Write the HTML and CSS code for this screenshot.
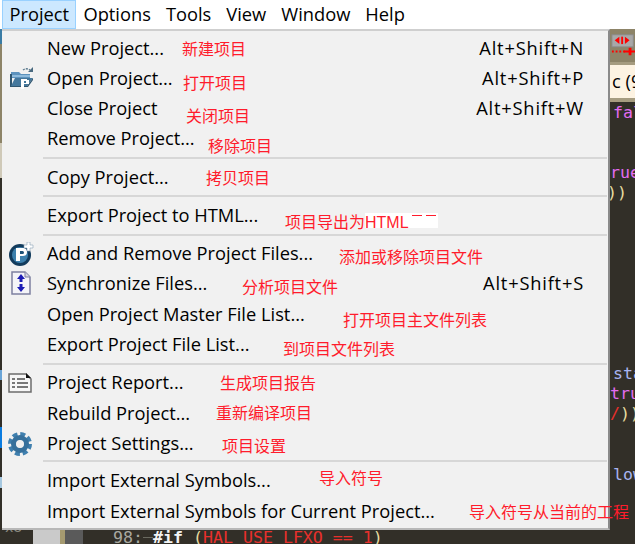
FILE: index.html
```html
<!DOCTYPE html>
<html lang="en">
<head>
    <meta charset="UTF-8">
    <meta name="viewport" content="width=device-width, initial-scale=1.0">
    <title>Project menu</title>
    <link rel="stylesheet" href="styles.css">
</head>
<body>
    <div class="menubar">
        <span class="menubar-item active">Project</span>
        <span class="menubar-item">Options</span>
        <span class="menubar-item">Tools</span>
        <span class="menubar-item">View</span>
        <span class="menubar-item">Window</span>
        <span class="menubar-item">Help</span>
    </div>

    <div class="workspace">
        <div class="left-strip">
            <i class="s1"></i><i class="s2"></i><i class="s3"></i><i class="s4"></i><i class="s5"></i><i class="s6"></i><i class="s7"></i><i class="s8"></i><i class="s9"></i><i class="s10"></i>
        </div>

        <div class="menu">
            <div class="rows rows-first">
                <div class="row"><span class="label">New Project...</span><span class="keys">Alt+Shift+N</span></div>
                <div class="row">
                    <svg class="icon icon-folder" viewBox="0 0 24 24">
                        <path d="M13 5a6 6 0 0 1 7 0" fill="none" stroke="#5f7d90" stroke-width="1.500" stroke-dasharray="2 1"/>
                        <path d="M23 2v5h-5z" fill="#4a6a80"/>
                        <path d="M1 7h8l2 2h9v4H1z" fill="#5d92bd"/>
                        <path d="M1 10h19v2H1z" fill="#8fbbdc"/>
                        <path d="M0 9h2v11h9v2H0z" fill="#2f556f"/>
                        <path d="M5 13h18l-6 8H1z" fill="#44779c"/>
                        <path d="M1 21h16l6-8v2l-5 7H1z" fill="#2f556f"/>
                        <path d="M11 14h6v1h2v4h-5v5h-3z" fill="#fff"/>
                        <path d="M14 16h2v2h-2z" fill="#44779c"/>
                    </svg>
                    <span class="label">Open Project...</span><span class="keys">Alt+Shift+P</span>
                </div>
                <div class="row"><span class="label">Close Project</span><span class="keys">Alt+Shift+W</span></div>
                <div class="row"><span class="label">Remove Project...</span></div>
            </div>
            <hr class="sep">
            <div class="rows">
                <div class="row"><span class="label">Copy Project...</span></div>
            </div>
            <hr class="sep">
            <div class="rows">
                <div class="row"><span class="label">Export Project to HTML...</span></div>
            </div>
            <hr class="sep">
            <div class="rows">
                <div class="row">
                    <svg class="icon icon-add" viewBox="0 0 26 24">
                        <circle cx="12" cy="13" r="11" fill="#123b5c"/>
                        <circle cx="12" cy="13" r="8" fill="#3d80ad"/>
                        <path d="M8 6h7q4 0 4 4t-4 4h-3v5H8z" fill="#fff"/>
                        <path d="M12 9h2.500q1.500 0 1.500 1.500T14.500 12H12z" fill="#1d5177"/>
                        <path d="M19 0h3v3h3v3h-3v3h-3V6h-3V3h3z" fill="#fff" stroke="#8aa3b5" stroke-width=".6"/>
                    </svg>
                    <span class="label">Add and Remove Project Files...</span>
                </div>
                <div class="row">
                    <svg class="icon icon-sync" viewBox="0 0 20 24">
                        <path d="M1 1h13l5 5v17H1z" fill="#f4f4f8" stroke="#7d80a0" stroke-width="1.500"/>
                        <path d="M14 1v5h5" fill="#d6d6e0" stroke="#7d80a0"/>
                        <path d="M10 3l4 5h-2.500v3h-3V8H6z" fill="#1c1cb4"/>
                        <path d="M10 21l4-5h-2.500v-3h-3v3H6z" fill="#1c1cb4"/>
                    </svg>
                    <span class="label">Synchronize Files...</span><span class="keys">Alt+Shift+S</span>
                </div>
                <div class="row"><span class="label">Open Project Master File List...</span></div>
                <div class="row"><span class="label">Export Project File List...</span></div>
            </div>
            <hr class="sep">
            <div class="rows rows-tight">
                <div class="row">
                    <svg class="icon icon-report" viewBox="0 0 24 20">
                        <path d="M1 1h17l5 5v13H1z" fill="#f6f6f6" stroke="#6c6c6c" stroke-width="1.500"/>
                        <path d="M18 0l5 5h-5z" fill="#111"/>
                        <path d="M4 5h3v2H4zM9 5h8v2H9zM4 9h3v2H4zM9 9h11v2H9zM4 13h3v2H4zM9 13h11v2H9z" fill="#777"/>
                    </svg>
                    <span class="label">Project Report...</span>
                </div>
                <div class="row"><span class="label">Rebuild Project...</span></div>
                <div class="row">
                    <svg class="icon icon-gear" viewBox="0 0 24 24">
                        <circle cx="12" cy="12" r="10" fill="none" stroke="#3f7fae" stroke-width="4" stroke-dasharray="5 2.850"/>
                        <circle cx="12" cy="12" r="6.500" fill="none" stroke="#36709c" stroke-width="5"/>
                        <circle cx="12" cy="12" r="3.500" fill="#f0f0f0"/>
                    </svg>
                    <span class="label">Project Settings...</span>
                </div>
            </div>
            <hr class="sep">
            <div class="rows rows-last">
                <div class="row"><span class="label">Import External Symbols...</span></div>
                <div class="row"><span class="label">Import External Symbols for Current Project...</span></div>
            </div>
        </div>

        <div class="editor">
            <div class="toolbar">
                <svg class="tool-icon" viewBox="0 0 28 24">
                    <rect x="1" y="1" width="23" height="13" fill="#a8a8a8" stroke="#8a8a8a"/>
                    <path d="M4 7l5-4v8zM20 7l-5-4v8z" fill="#f00"/>
                    <path d="M11 3h2v8h-2z" fill="#f00"/>
                    <path d="M1 19h14" stroke="#f00" stroke-width="2" stroke-dasharray="2 2"/>
                    <path d="M14 18h13v2H14zM19 15h3v8h-3z" fill="#f00"/>
                </svg>
            </div>
            <div class="tab">c (9</div>
            <div class="code">
                <div class="line indent pink">fal</div>
                <div class="line">&nbsp;</div>
                <div class="line">&nbsp;</div>
                <div class="line pink">rue</div>
                <div class="line yellow"><span class="clip">)</span>)</div>
                <div class="line">&nbsp;</div>
                <div class="line">&nbsp;</div>
                <div class="line">&nbsp;</div>
                <div class="line">&nbsp;</div>
                <div class="line">&nbsp;</div>
                <div class="line">&nbsp;</div>
                <div class="line">&nbsp;</div>
                <div class="line">&nbsp;</div>
                <div class="line indent blue">sta</div>
                <div class="line pink">true</div>
                <div class="line yellow"><span class="red">/</span>))</div>
                <div class="line">&nbsp;</div>
                <div class="line">&nbsp;</div>
                <div class="line indent blue">low</div>
            </div>
        </div>
    </div>

    <div class="bottom-line">
        <span class="b-dark">x8</span><span class="b-light"></span><span class="b-tan"></span><span class="b-gray"></span>
        <span class="b-code"><span class="num">98:</span><span class="tick"></span><b>#if</b> <span class="yellow">(</span><span class="red">HAL_USE_LFXO == 1</span><span class="yellow">)</span></span>
    </div>

    <!-- red notes someone wrote on top of the screenshot -->
    <span class="note n1">新建项目</span>
    <span class="note n2">打开项目</span>
    <span class="note n3">关闭项目</span>
    <span class="note n4">移除项目</span>
    <span class="note n5">拷贝项目</span>
    <span class="patch"></span>
    <span class="note n6">项目导出为HTML</span>
    <span class="note n7">添加或移除项目文件</span>
    <span class="note n8">分析项目文件</span>
    <span class="note n9">打开项目主文件列表</span>
    <span class="note n10">到项目文件列表</span>
    <span class="note n11">生成项目报告</span>
    <span class="note n12">重新编译项目</span>
    <span class="note n13">项目设置</span>
    <span class="note n14">导入符号</span>
    <span class="note n15">导入符号从当前的工程</span>
</body>
</html>
```

FILE: styles.css
```css
body {
    margin: 0;
    width: 635px;
    height: 544px;
    overflow: hidden;
    position: relative;
    background-color: #322f28;
    font-family: "Open Sans", "Noto Sans", sans-serif;
    color: #000;
}
.menubar {
    height: 29px;
    background: white;
    display: flex;
    padding-left: 2px;
    font-size: 18.3px;
}
.menubar-item {
    padding: 0 6.5px;
    line-height: 26px;
    border: 1px solid transparent;
    box-sizing: border-box;
    height: 29px;
}
.menubar-item.active {
    padding-right: 5.8px;
    background-color: #cce8ff;
    border: 1px solid #99d1ff;
}
.workspace {
    display: flex;
    height: 501px;
}
.left-strip {
    width: 2px;
    display: flex;
    flex-direction: column;
}
.left-strip i { display: block; }
.s1 { height: 15px; background: #3a7ca5; }
.s2 { height: 99px; background: #8d8468; }
.s3 { height: 35px; background: #cfc9b8; }
.s4 { height: 192px; background: #322f28; }
.s5 { height: 10px; background: #6aa5d8; }
.s6 { height: 47px; background: #322f28; }
.s7 { height: 21px; background: #0a7ce0; }
.s8 { height: 29px; background: #322f28; }
.s9 { height: 11px; background: #a6c8e0; }
.s10 { height: 42px; background: #322f28; }

.menu {
    width: 608px;
    background-color: #f1f1f1;
    border-top: 2px solid #cfcfcf;
    border-right: 2px solid #8a8a8a;
    border-bottom: 2px solid #b8b8b8;
    box-sizing: border-box;
}
.rows { padding: 2px 0 4px; }
.rows-first { padding-top: 1px; }
.rows-tight { padding-bottom: 3px; }
.rows-last .row { height: 30.8px; }
.sep {
    margin: 0 1px 0 41px;
    border: none;
    border-top: 2px solid #d7d7d7;
    height: 0;
}
.row {
    height: 30.27px;
    display: flex;
    align-items: center;
    position: relative;
    padding-left: 45px;
    padding-right: 24px;
    font-size: 18.3px;
    white-space: nowrap;
}
.label { flex: 1; }
.keys {
    text-align: right;
    letter-spacing: 0.8px;
}
.icon {
    position: absolute;
    display: block;
}
.icon-folder { left: 8px; top: 3px; width: 24px; height: 24px; }
.icon-add { left: 6px; top: 4px; width: 26px; height: 24px; }
.icon-sync { left: 9px; top: 3px; width: 20px; height: 24px; }
.icon-report { left: 6px; top: 6px; width: 24px; height: 20px; }
.icon-gear { left: 6px; top: 5px; width: 24px; height: 24px; }

.editor {
    flex: 1;
    overflow: hidden;
    font-family: "DejaVu Sans Mono", monospace;
    font-size: 16.6px;
    white-space: nowrap;
}
.toolbar {
    height: 33px;
    background-color: #8d8468;
    padding-top: 4px;
    padding-left: 1px;
    box-sizing: border-box;
}
.tool-icon {
    display: block;
    width: 26px;
    height: 24px;
}
.tab {
    height: 40px;
    background-color: #fdf3e2;
    border-top: 3px solid #a69c80;
    border-bottom: 4px solid #a69c80;
    box-sizing: border-box;
    line-height: 32px;
    font-family: "Open Sans", sans-serif;
    font-size: 18.3px;
    padding-left: 2px;
}
.code { padding-top: 1px; }
.line {
    height: 20.1px;
    line-height: 20px;
}
.indent { padding-left: 3px; }
.clip { margin-left: -3px; }
.pink { color: #e26cf0; }
.yellow { color: #e8dca0; }
.blue { color: #a8b4f0; }
.red { color: #e8302c; }

.bottom-line {
    height: 14px;
    display: flex;
    overflow: hidden;
    font-family: "DejaVu Sans Mono", monospace;
    font-size: 16.6px;
    line-height: 16px;
    white-space: pre;
}
.b-dark {
    width: 33px;
    padding-left: 5px;
    box-sizing: border-box;
    color: #8a8a80;
    font-size: 14px;
    line-height: 0;
    margin-top: -3px;
}
.b-light { width: 27px; background: #cacaca; }
.b-tan { width: 5px; background: #a59a70; }
.b-gray { width: 18px; background: #5a5a5a; }
.b-code { margin-left: 30px; }
.num { color: #a8a8a0; }
.tick {
    display: inline-block;
    width: 10px;
    height: 1px;
    margin-bottom: 5px;
    background: #6a6a60;
}
.b-code b { color: #f4f4f4; }

.note {
    position: absolute;
    color: #ff1c2c;
    font-family: "Liberation Sans", "Noto Sans CJK SC", sans-serif;
    font-size: 16px;
    line-height: 18px;
    white-space: nowrap;
}
.patch {
    position: absolute;
    left: 365px;
    top: 213px;
    width: 73px;
    height: 15px;
    background: white;
}
.patch::after {
    content: "";
    position: absolute;
    left: 47px;
    top: 2px;
    width: 24px;
    height: 1px;
    background: linear-gradient(90deg, #ff1c2c 40%, transparent 40%, transparent 60%, #ff1c2c 60%);
}
.n1 { left: 182px; top: 41px; }
.n2 { left: 183px; top: 75px; }
.n3 { left: 186px; top: 108px; }
.n4 { left: 208px; top: 138px; }
.n5 { left: 206px; top: 170px; }
.n6 { left: 285px; top: 214px; }
.n7 { left: 339px; top: 249px; }
.n8 { left: 242px; top: 279px; }
.n9 { left: 343px; top: 312px; }
.n10 { left: 283px; top: 341px; }
.n11 { left: 220px; top: 375px; }
.n12 { left: 216px; top: 405px; }
.n13 { left: 222px; top: 438px; }
.n14 { left: 319px; top: 470px; }
.n15 { left: 469px; top: 504px; }
```
